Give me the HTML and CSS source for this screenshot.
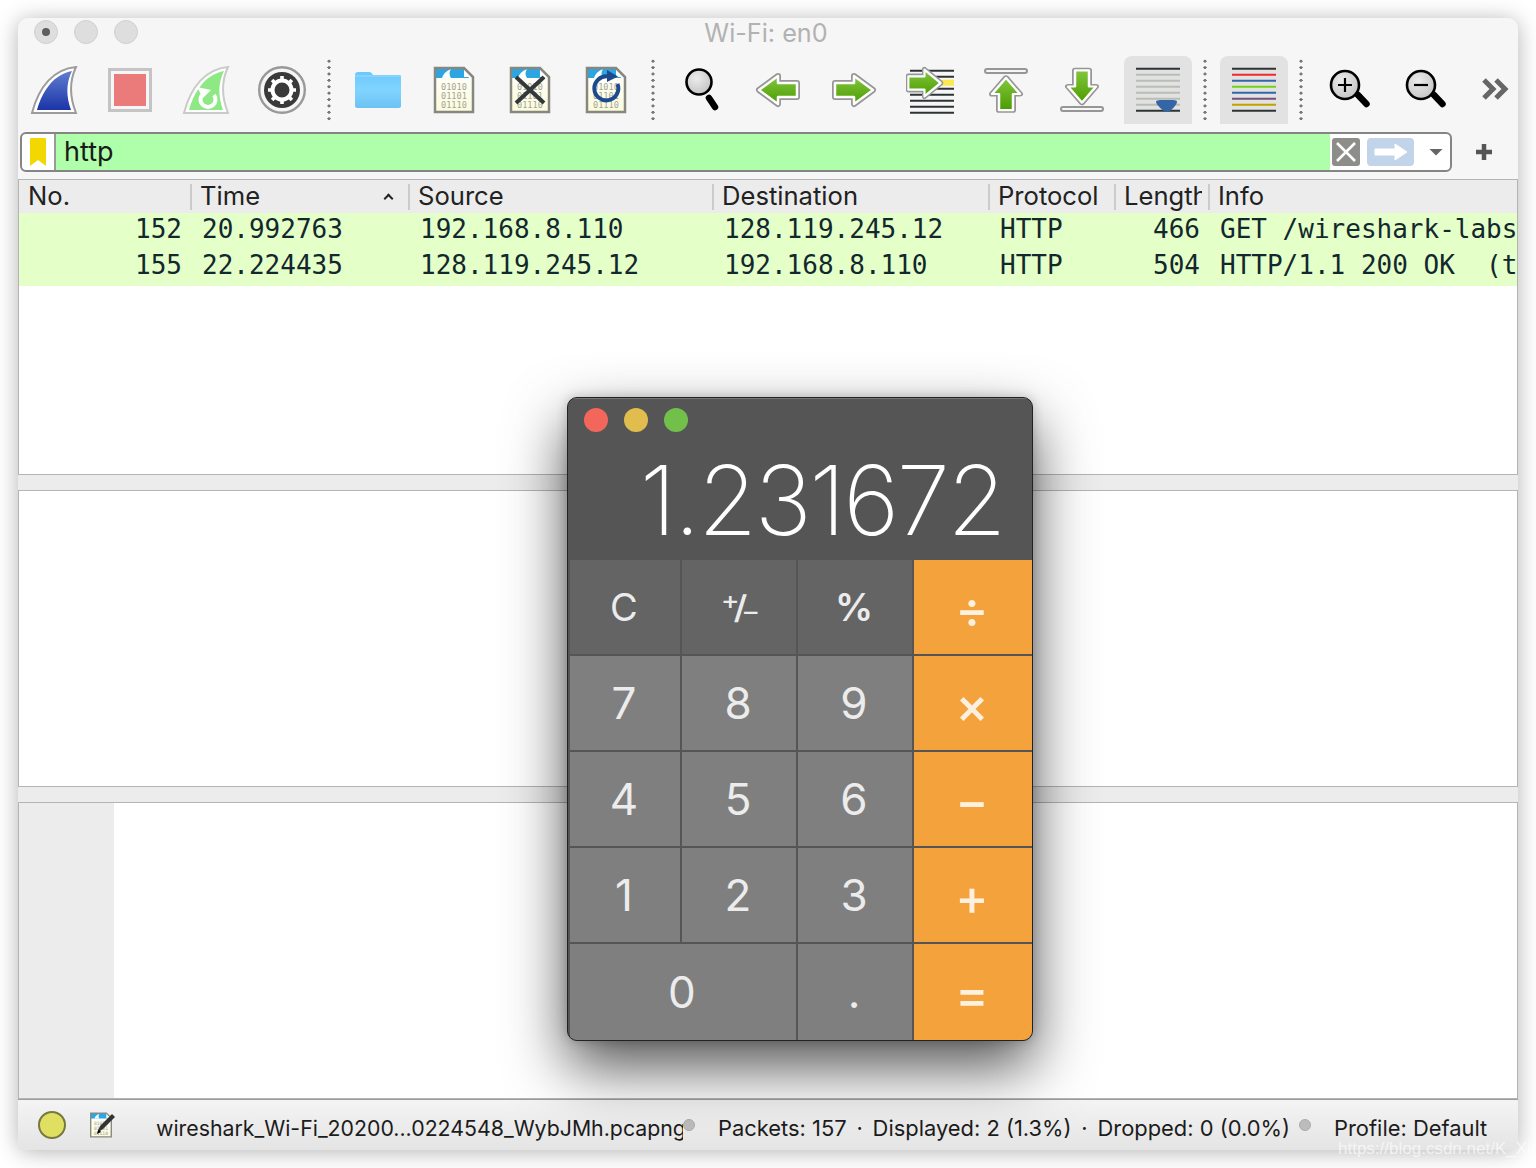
FILE: index.html
```html
<!DOCTYPE html>
<html lang="en">
<head>
    <meta charset="UTF-8">
    <title>Wi-Fi: en0</title>
    <link rel="stylesheet" href="styles.css">
</head>
<body>
    <!-- shared icon parts -->
    <svg class="icon-defs" width="0" height="0">
        <defs>
            <linearGradient id="gradBlue" x1="0" y1="0" x2="0" y2="1">
                <stop offset="0" stop-color="#5f7ed0"/>
                <stop offset="1" stop-color="#1c34a8"/>
            </linearGradient>
            <linearGradient id="gradGreen" x1="0" y1="0" x2="0" y2="1">
                <stop offset="0" stop-color="#84c63f"/>
                <stop offset="1" stop-color="#4b9c00"/>
            </linearGradient>
            <linearGradient id="gradGreenUp" x1="0" y1="0" x2="1" y2="0">
                <stop offset="0" stop-color="#4b9c00"/>
                <stop offset="1" stop-color="#84c63f"/>
            </linearGradient>
            <linearGradient id="gradGreenDown" x1="0" y1="0" x2="1" y2="0">
                <stop offset="0" stop-color="#84c63f"/>
                <stop offset="1" stop-color="#4b9c00"/>
            </linearGradient>
            <linearGradient id="gradPaper" x1="0" y1="0" x2="0" y2="1">
                <stop offset="0" stop-color="#ffffff"/>
                <stop offset="1" stop-color="#fbfbdc"/>
            </linearGradient>
            <linearGradient id="gradFolder" x1="0" y1="0" x2="0" y2="1">
                <stop offset="0" stop-color="#6cc8fb"/>
                <stop offset="0.5" stop-color="#80d4ff"/>
                <stop offset="1" stop-color="#6cc2f2"/>
            </linearGradient>
            <radialGradient id="gradLens" cx="0.4" cy="0.35" r="0.8">
                <stop offset="0" stop-color="#ececec"/>
                <stop offset="1" stop-color="#bdbdbd"/>
            </radialGradient>
            <g id="arrow">
                <path d="M5 17H24V10L43 24L24 38V31H5Z" fill="none" stroke="#969696" stroke-width="6" stroke-linejoin="round"/>
                <path d="M5 17H24V10L43 24L24 38V31H5Z" stroke="#fff" stroke-width="2.5" stroke-linejoin="round"/>
            </g>
            <g id="doc">
                <path d="M5 2H34L43 11V46H5Z" fill="url(#gradPaper)"/>
                <path d="M5 2H34V12H5Z" fill="#2ca6e2"/>
                <path d="M34 12L39 12L34 2Z" fill="#2ca6e2"/>
                <path d="M12 12C13 8 16 5 21 3C19 6 19 9 21 12Z" fill="#fff"/>
                <path d="M34 2L43 11H34Z" fill="#fff"/>
                <text class="doc-bits" x="11" y="24">01010</text>
                <text class="doc-bits" x="11" y="33">01101</text>
                <text class="doc-bits" x="11" y="42">01110</text>
                <path d="M5 2H34L43 11V46H5Z" fill="none" stroke="#878780" stroke-width="2.5"/>
            </g>
            <path id="fin" d="M46 1C24 3 9 20 2 47H46C40 32 39 16 46 1Z"/>
            <path id="finInner" d="M42 5C25 8 13 23 7 44H41C36 30 36 17 42 5Z"/>
        </defs>
    </svg>

    <div class="window">
        <div class="titlebar">
            <span class="light light-main"></span>
            <span class="light"></span>
            <span class="light"></span>
            <div class="title">Wi-Fi: en0</div>
        </div>

        <div class="toolbar">
            <div class="tool-btn">
                <svg class="icon" viewBox="0 0 48 48">
                    <use href="#fin" fill="#fff" stroke="#9c9c9c" stroke-width="2"/>
                    <use href="#finInner" fill="url(#gradBlue)"/>
                </svg>
            </div>
            <div class="tool-btn">
                <svg class="icon" viewBox="0 0 48 48">
                    <rect x="3.5" y="3.5" width="41" height="41" fill="#f6f6f6" stroke="#c4c4c4" stroke-width="3"/>
                    <rect x="8" y="8" width="32" height="32" fill="#eb7b7b"/>
                </svg>
            </div>
            <div class="tool-btn">
                <svg class="icon" viewBox="0 0 48 48">
                    <use href="#fin" fill="#fff" stroke="#cacaca" stroke-width="2"/>
                    <use href="#finInner" fill="#8ee985"/>
                    <path d="M32 29A7.500 7.500 0 1 1 20 29" fill="none" stroke="#fff" stroke-width="4"/>
                    <path d="M15 21L29 24L21 32Z" fill="#fff"/>
                </svg>
            </div>
            <div class="tool-btn">
                <svg class="icon" viewBox="0 0 48 48">
                    <circle cx="24" cy="24" r="22.8" fill="#f6f6f6" stroke="#999" stroke-width="2.4"/>
                    <circle cx="24" cy="24" r="18" fill="#3a3a3a"/>
                    <circle cx="24" cy="24" r="9.5" fill="#3a3a3a" stroke="#fff" stroke-width="4"/>
                    <g stroke="#fff" stroke-width="3.6">
                        <path d="M24 10V14M24 34V38M10 24H14M34 24H38M14.1 14.1L16.9 16.9M31.1 31.1L33.9 33.9M14.1 33.9L16.9 31.1M31.1 16.9L33.9 14.1"/>
                    </g>
                </svg>
            </div>
            <div class="tool-sep"></div>
            <div class="tool-btn">
                <svg class="icon" viewBox="0 0 48 48">
                    <path d="M1 9C1 7 2 6 4 6H15C17 6 18 7 19 9H46C47 9 47 10 47 11V40C47 41 46 42 45 42H3C2 42 1 41 1 40Z" fill="url(#gradFolder)"/>
                    <path d="M1 10H47" stroke="#9adcff" stroke-width="1"/>
                </svg>
            </div>
            <div class="tool-btn">
                <svg class="icon" viewBox="0 0 48 48"><use href="#doc"/></svg>
            </div>
            <div class="tool-btn">
                <svg class="icon" viewBox="0 0 48 48">
                    <use href="#doc"/>
                    <path d="M10 11L38 37M38 11L10 37" stroke="#33383a" stroke-width="4"/>
                </svg>
            </div>
            <div class="tool-btn">
                <svg class="icon" viewBox="0 0 48 48">
                    <use href="#doc"/>
                    <path d="M26 10.500A12 12 0 1 0 35.500 18" fill="none" stroke="#1d4a8e" stroke-width="4"/>
                    <path d="M25 4L36 10.500L25 16Z" fill="#1d4a8e"/>
                </svg>
            </div>
            <div class="tool-sep"></div>
            <div class="tool-btn">
                <svg class="icon" viewBox="0 0 48 48">
                    <path d="M31 32L37 41" stroke="#000" stroke-width="6.5" stroke-linecap="round"/>
                    <circle cx="21" cy="16" r="12.5" fill="url(#gradLens)" stroke="#000" stroke-width="2.6"/>
                </svg>
            </div>
            <div class="tool-btn">
                <svg class="icon" viewBox="0 0 48 48">
                    <use href="#arrow" fill="url(#gradGreen)" transform="matrix(-1 0 0 1 48 0)"/>
                </svg>
            </div>
            <div class="tool-btn">
                <svg class="icon" viewBox="0 0 48 48">
                    <use href="#arrow" fill="url(#gradGreen)"/>
                </svg>
            </div>
            <div class="tool-btn">
                <svg class="icon" viewBox="0 0 48 48">
                    <path d="M4 4.7H48M4 10.7H48M4 22.7H48M4 28.7H48M4 34.7H48M4 40.7H48M4 46.7H48" stroke="#2e3436" stroke-width="2"/>
                    <path d="M36 16.7H48" stroke="#fce94f" stroke-width="6"/>
                    <use href="#arrow" fill="url(#gradGreen)" transform="translate(18.5 17) scale(.85 .95) translate(-24 -24)"/>
                </svg>
            </div>
            <div class="tool-btn">
                <svg class="icon" viewBox="0 0 48 48">
                    <rect x="3" y="3" width="42" height="4" rx="2" fill="#f6f6f6" stroke="#969696" stroke-width="2"/>
                    <use href="#arrow" fill="url(#gradGreenUp)" transform="translate(24 28) scale(1 .85) rotate(-90) translate(-24 -24)"/>
                </svg>
            </div>
            <div class="tool-btn">
                <svg class="icon" viewBox="0 0 48 48">
                    <use href="#arrow" fill="url(#gradGreenDown)" transform="translate(24 20.5) scale(1 .85) rotate(90) translate(-24 -24)"/>
                    <rect x="3" y="41" width="42" height="4" rx="2" fill="#f6f6f6" stroke="#969696" stroke-width="2"/>
                </svg>
            </div>
            <div class="tool-btn tool-on">
                <svg class="icon" viewBox="0 0 48 48">
                    <path d="M2 2.7H46M2 44.7H46" stroke="#2e3436" stroke-width="2"/>
                    <path d="M2 8.7H46M2 14.7H46M2 20.7H46M2 26.7H46M2 32.7H46M2 38.7H46" stroke="#babdb6" stroke-width="2"/>
                    <path d="M22 36C22 34 26 34 33 34C40 34 43 34 43 36C43 38 37 46 33 46C29 46 22 38 22 36Z" fill="#3465a4"/>
                </svg>
            </div>
            <div class="tool-sep"></div>
            <div class="tool-btn tool-on">
                <svg class="icon" viewBox="0 0 48 48">
                    <path d="M2 2.7H46M2 44.7H46" stroke="#2e3436" stroke-width="2"/>
                    <path d="M2 8.7H46" stroke="#ef2929" stroke-width="2"/>
                    <path d="M2 14.7H46M2 26.7H46" stroke="#3465a4" stroke-width="2"/>
                    <path d="M2 20.7H46" stroke="#73d216" stroke-width="2"/>
                    <path d="M2 32.7H46" stroke="#75507b" stroke-width="2"/>
                    <path d="M2 38.7H46" stroke="#c4a000" stroke-width="2"/>
                </svg>
            </div>
            <div class="tool-sep"></div>
            <div class="tool-btn">
                <svg class="icon" viewBox="0 0 48 48">
                    <path d="M32 29L40.5 38" stroke="#000" stroke-width="6.5" stroke-linecap="round"/>
                    <circle cx="19" cy="19" r="14" fill="url(#gradLens)" stroke="#000" stroke-width="2.6"/>
                    <path d="M12 19H26M19 12V26" stroke="#000" stroke-width="2.2"/>
                </svg>
            </div>
            <div class="tool-btn">
                <svg class="icon" viewBox="0 0 48 48">
                    <path d="M32 29L40.5 38" stroke="#000" stroke-width="6.5" stroke-linecap="round"/>
                    <circle cx="19" cy="19" r="14" fill="url(#gradLens)" stroke="#000" stroke-width="2.6"/>
                    <path d="M12 19H26" stroke="#000" stroke-width="2.2"/>
                </svg>
            </div>
            <div class="tool-more">
                <svg class="icon-more" viewBox="0 0 28 22">
                    <path d="M3 2L12 11L3 20M15 2L24 11L15 20" fill="none" stroke="#666" stroke-width="5"/>
                </svg>
            </div>
        </div>

        <div class="filter-row">
            <div class="filter">
                <div class="filter-mark">
                    <svg class="icon-mark" viewBox="0 0 16 28">
                        <path d="M0 1C0 .5 .5 0 1 0H15C15.500 0 16 .5 16 1V28L8 22L0 28Z" fill="#f2d800"/>
                    </svg>
                </div>
                <div class="filter-text">http</div>
                <div class="filter-clear">
                    <svg class="icon-fill" viewBox="0 0 28 28">
                        <path d="M5 5L23 23M23 5L5 23" stroke="#fff" stroke-width="2.6"/>
                    </svg>
                </div>
                <div class="filter-apply">
                    <svg class="icon-fill" viewBox="0 0 47 28">
                        <path d="M8 11H28V6L40 14L28 22V17H8Z" fill="#fff" stroke="#fff" stroke-linejoin="round"/>
                    </svg>
                </div>
                <div class="filter-drop"></div>
            </div>
            <svg class="filter-plus" viewBox="0 0 18 18">
                <path d="M9 1V17M1 9H17" stroke="#555" stroke-width="4.5"/>
            </svg>
        </div>

        <div class="panel panel-list">
            <div class="list-row list-head">
                <div class="cell">No.</div>
                <div class="cell cell-sort">Time<span class="sort-mark"></span></div>
                <div class="cell">Source</div>
                <div class="cell">Destination</div>
                <div class="cell">Protocol</div>
                <div class="cell cell-cut">Length</div>
                <div class="cell">Info</div>
            </div>
            <div class="list-row packet">
                <div class="cell num">152</div>
                <div class="cell">20.992763</div>
                <div class="cell">192.168.8.110</div>
                <div class="cell">128.119.245.12</div>
                <div class="cell">HTTP</div>
                <div class="cell num">466</div>
                <div class="cell">GET /wireshark-labs/INTRO-wireshark-file1.html HTTP/1.1</div>
            </div>
            <div class="list-row packet packet-last">
                <div class="cell num">155</div>
                <div class="cell">22.224435</div>
                <div class="cell">128.119.245.12</div>
                <div class="cell">192.168.8.110</div>
                <div class="cell">HTTP</div>
                <div class="cell num">504</div>
                <div class="cell">HTTP/1.1 200 OK  (text/html)</div>
            </div>
        </div>
        <div class="split"></div>
        <div class="panel"></div>
        <div class="split"></div>
        <div class="panel panel-bytes">
            <div class="gutter"></div>
        </div>

        <div class="statusbar">
            <span class="led"></span>
            <svg class="icon-edit" viewBox="0 0 28 28">
                <svg x="0" y="0" width="26" height="28" viewBox="0 0 48 48"><use href="#doc"/></svg>
                <path d="M9 22L12 15L24 3L27 6L15 18Z" fill="#333"/>
                <path d="M9 23L10.500 18.500L13 21Z" fill="#000"/>
            </svg>
            <div class="status-file">wireshark_Wi-Fi_20200...0224548_WybJMh.pcapng</div>
            <span class="status-dot"></span>
            <div class="status-stats">
                <span>Packets: 157</span><span>·</span><span>Displayed: 2 (1.3%)</span><span>·</span><span>Dropped: 0 (0.0%)</span>
            </div>
            <span class="status-dot"></span>
            <div class="status-profile">Profile: Default</div>
        </div>

        <!-- calculator window floats over wireshark -->
        <div class="calc">
            <div class="calc-display">
                <div class="calc-lights">
                    <span class="calc-light red"></span>
                    <span class="calc-light yellow"></span>
                    <span class="calc-light green"></span>
                </div>
                <div class="calc-value">1.231672</div>
            </div>
            <div class="calc-keys">
                <div class="key key-fn">C</div>
                <div class="key key-fn key-sign">⁺∕₋</div>
                <div class="key key-fn key-pct">%</div>
                <div class="key key-op">÷</div>
                <div class="key">7</div>
                <div class="key">8</div>
                <div class="key">9</div>
                <div class="key key-op">×</div>
                <div class="key">4</div>
                <div class="key">5</div>
                <div class="key">6</div>
                <div class="key key-op">−</div>
                <div class="key">1</div>
                <div class="key">2</div>
                <div class="key">3</div>
                <div class="key key-op">+</div>
                <div class="key key-zero">0</div>
                <div class="key">.</div>
                <div class="key key-op">=</div>
            </div>
        </div>
    </div>

    <div class="watermark">https://blog.csdn.net/K_Xin</div>
</body>
</html>
```

FILE: styles.css
```css
* {
    margin: 0;
    padding: 0;
    box-sizing: border-box;
}

html, body {
    width: 1536px;
    height: 1168px;
    overflow: hidden;
    background: #fff;
}

body {
    position: relative;
    padding: 18px;
    font-family: Inter, "Liberation Sans", sans-serif;
    color: #1a1a1a;
}

.icon-defs {
    position: absolute;
}

.doc-bits {
    font-family: "DejaVu Sans Mono", monospace;
    font-size: 8.6px;
    fill: #a4a494;
}

.window {
    position: relative;
    width: 1500px;
    height: 1132px;
    display: flex;
    flex-direction: column;
    background: #f6f6f6;
    border-radius: 10px;
    box-shadow: 0 2px 22px rgba(0, 0, 0, 0.3);
}

/* title bar */
.titlebar {
    height: 38px;
    display: flex;
    align-items: flex-start;
    gap: 16px;
    padding: 2px 0 0 16px;
    position: relative;
}

.light {
    width: 24px;
    height: 24px;
    border-radius: 50%;
    background: #dedede;
    border: 1px solid #d0d0d0;
    display: flex;
    align-items: center;
    justify-content: center;
}

.light-main::after {
    content: "";
    width: 8px;
    height: 8px;
    border-radius: 50%;
    background: #5e5e5e;
}

.title {
    position: absolute;
    left: 0;
    right: 0;
    top: 0;
    text-align: center;
    font-size: 25.2px;
    line-height: 30px;
    color: #b2b2b2;
    padding-right: 4px;
}

/* toolbar */
.toolbar {
    height: 68px;
    display: flex;
    align-items: center;
    gap: 8px;
    padding-left: 2px;
    margin-bottom: 8px;
}

.tool-btn {
    flex: none;
    width: 68px;
    height: 68px;
    display: flex;
    align-items: center;
    justify-content: center;
    border-radius: 8px 8px 0 0;
}

.tool-on {
    background: #e2e2e2;
}

.icon {
    width: 48px;
    height: 48px;
}

.tool-sep {
    flex: none;
    width: 12px;
    height: 64px;
    background: radial-gradient(circle, #777 1.5px, transparent 1.7px) calc(50% - 1px) top / 4px 6.4px repeat-y;
}

.tool-more {
    flex: none;
    width: 54px;
    display: flex;
    justify-content: center;
}

.icon-more {
    width: 28px;
    height: 22px;
    margin-top: -2px;
}

/* display filter */
.filter-row {
    height: 40px;
    display: flex;
    align-items: center;
    padding-left: 2px;
    margin-bottom: 7px;
}

.filter {
    width: 1432px;
    height: 40px;
    display: flex;
    align-items: center;
    background: #fff;
    border: 2px solid #858585;
    border-radius: 6px;
}

.filter-mark {
    width: 34px;
    height: 100%;
    display: flex;
    align-items: center;
    padding-left: 8px;
    border-right: 2px solid #9a9a9a;
}

.icon-mark {
    width: 16px;
    height: 28px;
}

.filter-text {
    flex: 1;
    height: 100%;
    background: #afffaa;
    font-size: 27px;
    line-height: 36px;
    padding-left: 8px;
}

.filter-clear {
    width: 28px;
    height: 28px;
    margin-left: 2px;
    background: #8d8e89;
    border-radius: 3px;
}

.filter-apply {
    width: 47px;
    height: 28px;
    margin-left: 7px;
    background: #c2d4ea;
    border-radius: 4px;
}

.icon-fill {
    display: block;
    width: 100%;
    height: 100%;
}

.filter-drop {
    width: 14px;
    height: 7px;
    margin: 0 7px 0 15px;
    background: #666;
    clip-path: polygon(0 0, 100% 0, 50% 100%);
}

.filter-plus {
    width: 18px;
    height: 18px;
    margin-left: 23px;
}

/* panes */
.panel {
    position: relative;
    height: 297px;
    background: #fff;
    border: 1px solid #b4b4b4;
    overflow: hidden;
}

.panel-list {
    height: 296px;
}

.split {
    height: 15px;
    background: #ececec;
}

.gutter {
    width: 95px;
    height: 100%;
    background: #ececec;
}

.list-row {
    display: grid;
    grid-template-columns: 171px 218px 304px 276px 126px 94px 310px;
}

.list-head {
    height: 33px;
    background: #ececec;
    font-size: 25.6px;
    line-height: 31px;
    color: #222;
}

.list-head .cell {
    position: relative;
    padding-left: 10px;
    overflow: hidden;
    white-space: nowrap;
}

.list-head .cell:first-child {
    padding-left: 9px;
}

.list-head .cell + .cell::before {
    content: "";
    position: absolute;
    left: 0;
    top: 4px;
    bottom: 3px;
    width: 2px;
    background: #cbcbcb;
}

.list-head .cell-cut {
    width: 88px;
}

.sort-mark {
    position: absolute;
    right: 16px;
    top: 15px;
    width: 7px;
    height: 7px;
    border-left: 2px solid #222;
    border-top: 2px solid #222;
    transform: rotate(45deg);
}

.packet {
    height: 36px;
    background: #e4ffc7;
    color: #12272e;
    font-family: "DejaVu Sans Mono", monospace;
    font-size: 26px;
    line-height: 33px;
}

.packet-last {
    height: 37px;
}

.packet .cell {
    padding-left: 12px;
    white-space: pre;
    overflow: hidden;
}

.packet .num {
    padding: 0 8px 0 0;
    text-align: right;
}

/* status bar */
.statusbar {
    height: 51px;
    display: flex;
    align-items: center;
    font-size: 21.9px;
    color: #1c1c1c;
    background: linear-gradient(#f4f4f4, #e4e4e4);
    border-top: 1px solid #9d9d9d;
    border-radius: 0 0 10px 10px;
}

.led {
    flex: none;
    width: 28px;
    height: 28px;
    margin-left: 20px;
    border-radius: 50%;
    background: #dfdf62;
    border: 2px solid #777740;
}

.icon-edit {
    flex: none;
    width: 28px;
    height: 28px;
    margin-left: 22px;
}

.status-file {
    width: 527px;
    margin-left: 40px;
    padding-top: 5px;
    font-size: 21.3px;
    overflow: hidden;
    white-space: nowrap;
}

.status-dot {
    flex: none;
    width: 12px;
    height: 12px;
    border-radius: 50%;
    background: #bcbcbc;
    border: 1px solid #ababab;
}

.status-stats {
    width: 572px;
    margin: 0 9px 0 23px;
    padding-top: 5px;
    display: flex;
    justify-content: space-between;
    white-space: nowrap;
}

.status-profile {
    margin-left: 23px;
    padding-top: 5px;
    white-space: nowrap;
}

/* calculator */
.calc {
    position: absolute;
    left: 549px;
    top: 379px;
    width: 466px;
    height: 644px;
    border: 1px solid #222;
    border-radius: 10px;
    background: #555;
    overflow: hidden;
    box-shadow: 0 26px 60px rgba(0, 0, 0, 0.68), 0 0 12px rgba(0, 0, 0, 0.2);
}

.calc-display {
    height: 162px;
    padding: 9px 0 0 16px;
    border-top: 1px solid #777;
}

.calc-lights {
    display: flex;
    gap: 16px;
}

.calc-light {
    width: 24px;
    height: 24px;
    border-radius: 50%;
}

.red { background: #f2665c; }
.yellow { background: #e0bd4c; }
.green { background: #72c04a; }

.calc-value {
    font-weight: 200;
    font-size: 96px;
    line-height: 110px;
    letter-spacing: -2.5px;
    text-align: right;
    color: #fff;
    padding-right: 28px;
    margin-top: 13px;
}

.calc-keys {
    display: grid;
    grid-template-columns: 110px 114px 114px 118px;
    grid-template-rows: repeat(4, 94px) 96px;
    gap: 2px;
    padding-left: 2px;
}

.key {
    display: flex;
    align-items: center;
    justify-content: center;
    padding-right: 2px;
    background: #7f7f7f;
    color: #ececec;
    font-size: 44px;
    font-weight: 400;
}

.key-fn {
    background: #646464;
    font-size: 38px;
}

.key-sign {
    font-family: "DejaVu Sans", sans-serif;
    font-weight: 700;
    font-size: 34px;
    letter-spacing: -5px;
}

.key-pct {
    font-weight: 600;
}

.key-op {
    background: #f4a33c;
    color: #fdf0e0;
    font-size: 50px;
    font-weight: 500;
    padding-top: 4px;
}

.key-zero {
    grid-column: span 2;
}

.watermark {
    position: absolute;
    left: 1338px;
    top: 1139px;
    font-family: "Liberation Sans", sans-serif;
    font-size: 17px;
    color: rgba(255, 255, 255, 0.65);
    white-space: nowrap;
}
```
